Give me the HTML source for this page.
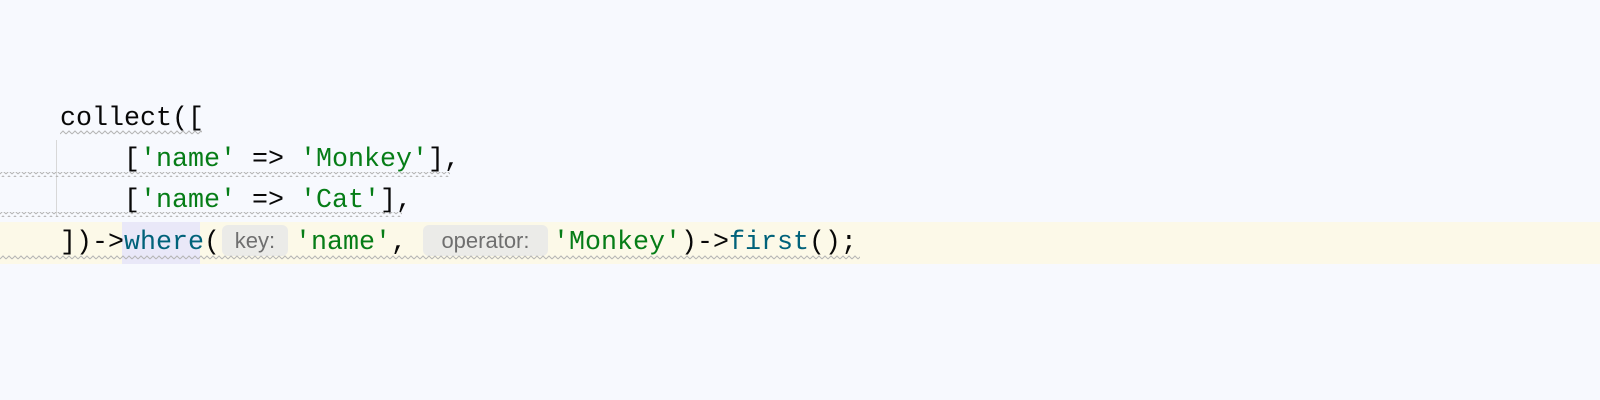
<!DOCTYPE html>
<html><head><style>
html,body{margin:0;padding:0}
body{width:1600px;height:400px;background:#f7f9fe;position:relative;overflow:hidden;font-family:"Liberation Mono","DejaVu Sans Mono",monospace;font-size:26.67px;color:#080808}
.ln{position:absolute;left:60px;height:41px;line-height:41px;white-space:pre}
.s{color:#067d17}.f{color:#00627a}
.h{display:inline-block;font-family:"Liberation Sans","DejaVu Sans",sans-serif;font-size:22px;color:#6f6f6f;background:#ebebe8;border-radius:6px;height:31px;line-height:31px;vertical-align:1px;text-align:center}
</style></head><body>
<div style="position:absolute;left:0;top:222px;width:1600px;height:42px;background:#fcf9e8"></div>
<div style="position:absolute;left:122px;top:222px;width:78px;height:42px;background:#e9e8f8"></div>
<div style="position:absolute;left:56px;top:140px;width:1px;height:76px;background:#d8d8d8"></div>
<div class="ln" style="top:99px">collect([</div>
<div class="ln" style="top:140px">    [<span class="s">'name'</span> =&gt; <span class="s">'Monkey'</span>],</div>
<div class="ln" style="top:181px">    [<span class="s">'name'</span> =&gt; <span class="s">'Cat'</span>],</div>
<div class="ln" style="top:223px">])-&gt;<span class="f">where</span>(<span class="h" style="width:66px;margin-left:2px;margin-right:7px">key:</span><span class="s">'name'</span>, <span class="h" style="width:125px;margin-left:0px;margin-right:5px">operator:</span><span class="s">'Monkey'</span>)-&gt;<span class="f">first</span>();</div>
<svg width="1600" height="400" style="position:absolute;left:0;top:0">
<defs><pattern id="w" width="6" height="5" patternUnits="userSpaceOnUse"><path d="M0 4 L3 1 L6 4" fill="none" stroke="#b5b5b5" stroke-width="1"/></pattern></defs>
<rect x="60" y="130" width="142" height="5" fill="url(#w)"/>
<rect x="0" y="172" width="450" height="5" fill="url(#w)"/>
<rect x="0" y="212" width="402" height="5" fill="url(#w)"/>
<rect x="0" y="255" width="860" height="5" fill="url(#w)"/>
</svg>
</body></html>
